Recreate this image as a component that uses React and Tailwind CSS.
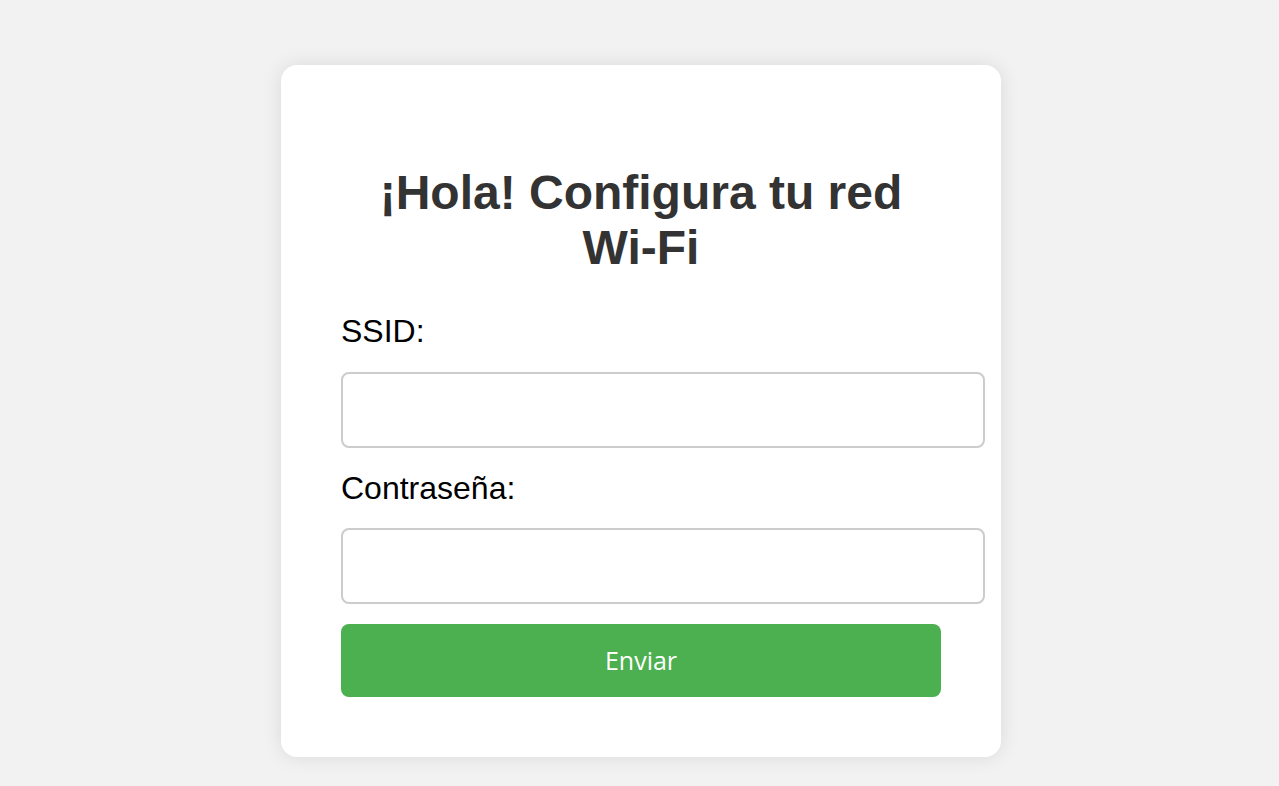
import React, { useState } from 'react';

export default function App() {
  const [ssid, setSsid] = useState('');
  const [password, setPassword] = useState('');

  const handleSubmit = (e) => {
    e.preventDefault();
  };

  return (
    <div className="min-h-[786px] bg-[#f2f2f2] pt-[65px] pl-[3px] flex justify-center items-start font-['Liberation_Sans',Arial,sans-serif]">
      <form
        onSubmit={handleSubmit}
        className="w-[720px] bg-white rounded-2xl shadow-[0_0_20px_rgba(0,0,0,0.1)] p-[60px]"
      >
        <h1 className="mt-[40px] mb-[38px] text-[48px] font-bold text-[#333] text-center leading-[55px]">
          ¡Hola! Configura tu red Wi-Fi
        </h1>

        <label htmlFor="ssid" className="block text-[32px] leading-[37px] text-black mb-[22px]">
          SSID:
        </label>
        <input
          id="ssid"
          type="text"
          value={ssid}
          onChange={e => setSsid(e.target.value)}
          className="block w-[644px] h-[76px] px-5 mb-[22px] border-2 border-[#ccc] rounded-lg text-[28px] outline-none"
        />

        <label htmlFor="password" className="block text-[32px] leading-[37px] text-black mb-[21px]">
          Contraseña:
        </label>
        <input
          id="password"
          type="password"
          value={password}
          onChange={e => setPassword(e.target.value)}
          className="block w-[644px] h-[76px] px-5 mb-[20px] border-2 border-[#ccc] rounded-lg text-[28px] outline-none"
        />

        <button
          type="submit"
          className="block w-full h-[73px] bg-[#4caf50] text-white rounded-lg text-[25px] font-['Open_Sans',sans-serif]"
        >
          Enviar
        </button>
      </form>
    </div>
  );
}
